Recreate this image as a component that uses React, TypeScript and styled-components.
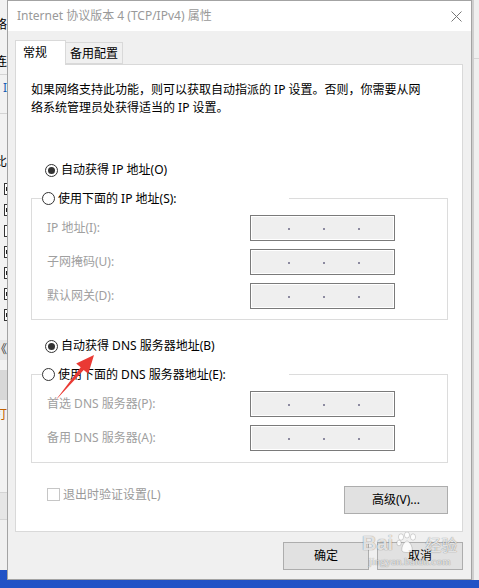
import React from "react";
import styled, { createGlobalStyle } from "styled-components";

const Global = createGlobalStyle`
  html, body { margin: 0; padding: 0; }
  body {
    width: 479px; height: 588px; overflow: hidden; background: #1c4bbd;
    font-family: "Noto Sans", "Noto Sans CJK SC", sans-serif;
    font-size: 12px; color: #000;
  }
`;

const Screen = styled.div`
  position: relative;
  width: 479px;
  height: 588px;
  overflow: hidden;
  display: grid;
  grid-template-columns: 7px 465px 7px;
  grid-template-rows: 580px 8px;
  background: linear-gradient(#1a45b0, #2153c6);
`;

/* ---------- background window strips ---------- */
const LeftStrip = styled.div`
  grid-column: 1;
  grid-row: 1;
  align-self: start;
  height: 570px;
  background: #f2f2f2;
  display: flex;
  flex-direction: column;
  overflow: hidden;
`;

const StripSeg = styled.div<{ $h: number; $bg?: string; $color?: string; $line?: boolean; $start?: boolean }>`
  height: ${(p) => p.$h}px;
  flex-shrink: 0;
  box-sizing: border-box;
  background: ${(p) => p.$bg || "transparent"};
  color: ${(p) => p.$color || "#000"};
  border-bottom: ${(p) => (p.$line ? "1px solid #d4d4d4" : "none")};
  display: flex;
  align-items: center;
  justify-content: ${(p) => (p.$start ? "flex-start" : "flex-end")};
  padding-left: ${(p) => (p.$start ? "4px" : "0")};
  overflow: hidden;
  white-space: nowrap;
  font-size: 12px;
  line-height: 14px;
`;

const StripCheck = styled.span<{ $on?: boolean }>`
  width: 12px;
  height: 12px;
  flex-shrink: 0;
  box-sizing: border-box;
  border: 1px solid #333;
  background: #fff;
  display: flex;
  align-items: center;
  padding-left: 1px;
  &::after {
    content: "";
    display: ${(p) => (p.$on ? "block" : "none")};
    width: 2px;
    height: 4px;
    background: #222;
  }
`;

const RightStrip = styled.div`
  grid-column: 3;
  grid-row: 1;
  background: #efefef;
  border-left: 2px solid #cfcfcf;
  display: flex;
  flex-direction: column;
`;

const RightSeg = styled.div<{ $h: number }>`
  height: ${(p) => p.$h}px;
  border-bottom: 1px solid #d6d6d6;
`;

/* ---------- dialog ---------- */
const Dialog = styled.div`
  grid-column: 2;
  grid-row: 1;
  box-sizing: border-box;
  height: 580px;
  border: 1px solid #a3a3a3;
  background: #f0f0f0;
  display: flex;
  flex-direction: column;
`;

const TitleBar = styled.div`
  height: 30px;
  flex-shrink: 0;
  background: #fff;
  display: flex;
  align-items: center;
  padding-left: 9px;
`;

const Title = styled.span`
  color: #999;
  font-size: 12px;
  line-height: 16px;
  white-space: nowrap;
`;

const CloseBox = styled.span`
  margin-left: auto;
  width: 30px;
  height: 30px;
  display: flex;
  align-items: center;
  justify-content: center;
`;

const Body = styled.div`
  flex: 1;
  display: flex;
  flex-direction: column;
  padding: 9px 8px 9px 7px;
`;

const Tabs = styled.div`
  height: 24px;
  display: flex;
  align-items: flex-end;
  position: relative;
  z-index: 1;
`;

const Tab = styled.div<{ $active?: boolean }>`
  box-sizing: border-box;
  height: ${(p) => (p.$active ? "25px" : "22px")};
  width: ${(p) => (p.$active ? "51px" : "57px")};
  margin-bottom: ${(p) => (p.$active ? "-1px" : "0")};
  background: ${(p) => (p.$active ? "#fff" : "#f0f0f0")};
  border: 1px solid #d9d9d9;
  border-bottom: ${(p) => (p.$active ? "none" : "1px solid #d9d9d9")};
  border-left: ${(p) => (p.$active ? "1px solid #d9d9d9" : "none")};
  padding-left: ${(p) => (p.$active ? "7px" : "4px")};
  padding-top: ${(p) => (p.$active ? "3px" : "2px")};
  line-height: 18px;
  font-size: 12px;
  white-space: nowrap;
`;

const Panel = styled.div`
  box-sizing: border-box;
  height: 468px;
  flex-shrink: 0;
  background: #fff;
  border: 1px solid #d9d9d9;
  padding: 16px 14px 0 15px;
  display: flex;
  flex-direction: column;
`;

const Desc = styled.div`
  line-height: 18px;
  white-space: nowrap;
`;

const RadioRow = styled.div<{ $mt?: number }>`
  display: flex;
  align-items: center;
  height: 20px;
  margin-top: ${(p) => p.$mt || 0}px;
  gap: 3px;
  white-space: nowrap;
  line-height: 20px;
`;

const RadioIndent = styled.span`
  width: 11px;
  flex-shrink: 0;
`;

const Radio = styled.span<{ $checked?: boolean }>`
  width: 13px;
  height: 13px;
  box-sizing: border-box;
  border-radius: 50%;
  border: 1px solid #333;
  background: #fff;
  flex-shrink: 0;
  display: flex;
  align-items: center;
  justify-content: center;
  &::after {
    content: "";
    width: 7px;
    height: 7px;
    border-radius: 50%;
    background: ${(p) => (p.$checked ? "#333" : "transparent")};
  }
`;

const Group = styled.fieldset<{ $mt: number; $pb: number }>`
  margin: ${(p) => p.$mt}px 0 0 0;
  padding: 6px 0 ${(p) => p.$pb}px 0;
  border: 1px solid #dcdcdc;
  min-width: 0;
`;

const Legend = styled.legend<{ $w: number }>`
  padding: 0;
  margin-left: 10px;
  width: ${(p) => p.$w}px;
  height: 21px;
  display: flex;
  align-items: center;
  gap: 3px;
  background: #fff;
  white-space: nowrap;
  line-height: 21px;
`;

const FieldGrid = styled.div`
  margin-left: 15px;
  display: grid;
  grid-template-columns: 203px 145px;
  row-gap: 8px;
  align-items: center;
`;

const FieldLabel = styled.span`
  color: #a0a0a0;
  white-space: nowrap;
  line-height: 16px;
`;

const IpBox = styled.div`
  box-sizing: border-box;
  height: 26px;
  border: 1px solid #7a7a7a;
  box-shadow: inset 0 0 0 1px #fff;
  background: #efefef;
  display: flex;
  align-items: center;
  padding: 2px 0 0 37px;
  gap: 33px;
`;

const IpDot = styled.span`
  width: 2px;
  height: 2px;
  background: #8c8aa0;
`;

const BottomRow = styled.div`
  margin-top: 23px;
  display: flex;
  justify-content: space-between;
  align-items: flex-start;
`;

const CheckLabel = styled.div`
  margin: 2px 0 0 16px;
  display: flex;
  align-items: center;
  gap: 3px;
  color: #9a9a9a;
  height: 13px;
  line-height: 13px;
  white-space: nowrap;
`;

const CheckBox = styled.span`
  width: 13px;
  height: 13px;
  box-sizing: border-box;
  border: 1px solid #c6c6c6;
  background: #fff;
  flex-shrink: 0;
`;

const Button = styled.div<{ $w: number }>`
  box-sizing: border-box;
  width: ${(p) => p.$w}px;
  height: 28px;
  background: #e1e1e1;
  border: 1px solid #adadad;
  display: flex;
  align-items: center;
  justify-content: center;
  white-space: nowrap;
  line-height: 16px;
`;

const ButtonRow = styled.div`
  margin-top: 10px;
  display: flex;
  justify-content: flex-end;
  gap: 8px;
`;

/* ---------- overlays ---------- */
const ArrowSvg = styled.svg`
  position: absolute;
  left: 0;
  top: 0;
  pointer-events: none;
`;

const Watermark = styled.div`
  position: absolute;
  left: 362px;
  top: 532px;
  display: flex;
  flex-direction: column;
  align-items: center;
  pointer-events: none;
  color: rgba(255, 255, 255, 0.8);
  text-shadow: 0 0 1px rgba(0, 0, 0, 0.35), 0 0 1px rgba(0, 0, 0, 0.25);
`;

const WmTop = styled.div`
  display: flex;
  align-items: flex-end;
  gap: 2px;
`;

const WmBai = styled.span`
  font-family: "Liberation Sans", Arial, sans-serif;
  font-weight: bold;
  font-size: 20px;
  line-height: 22px;
`;

const WmJy = styled.span`
  font-family: "Noto Sans CJK SC", sans-serif;
  font-size: 16px;
  line-height: 20px;
  margin-left: 4px;
`;

const WmUrl = styled.span`
  font-family: "Liberation Serif", serif;
  font-size: 11px;
  line-height: 12px;
  margin-top: 1px;
`;

const ipRows = ["IP 地址(I):", "子网掩码(U):", "默认网关(D):"];
const dnsRows = ["首选 DNS 服务器(P):", "备用 DNS 服务器(A):"];

function IpField() {
  return (
    <IpBox>
      <IpDot />
      <IpDot />
      <IpDot />
    </IpBox>
  );
}

const stripChecks = [true, true, false, true, true, true, true];

export default function App() {
  return (
    <>
      <Global />
      <Screen>
        <LeftStrip>
          <StripSeg $h={50}>络</StripSeg>
          <StripSeg $h={25} $line>连</StripSeg>
          <StripSeg $h={25} $color="#1a5fb4">I</StripSeg>
          <StripSeg $h={14} $line />
          <StripSeg $h={31} />
          <StripSeg $h={33}>比</StripSeg>
          {stripChecks.map((on, i) => (
            <StripSeg key={i} $h={21} $start>
              <StripCheck $on={on} />
            </StripSeg>
          ))}
          <StripSeg $h={15} />
          <StripSeg $h={20} $bg="#e6e6e6" $color="#333">《</StripSeg>
          <StripSeg $h={10} />
          <StripSeg $h={30} $bg="#d8d8d8" />
          <StripSeg $h={30} $color="#c06000">打</StripSeg>
          <StripSeg $h={63} $line />
          <StripSeg $h={27} $bg="#e6e6e6" $line />
          <StripSeg $h={50} $bg="#f0f0f0" />
        </LeftStrip>

        <Dialog>
          <TitleBar>
            <Title>Internet 协议版本 4 (TCP/IPv4) 属性</Title>
            <CloseBox>
              <svg width="11" height="11" viewBox="0 0 11 11">
                <path d="M0.5 0.5 L10.5 10.5 M10.5 0.5 L0.5 10.5" stroke="#777" strokeWidth="1" fill="none" />
              </svg>
            </CloseBox>
          </TitleBar>
          <Body>
            <Tabs>
              <Tab $active>常规</Tab>
              <Tab>备用配置</Tab>
            </Tabs>
            <Panel>
              <Desc>
                如果网络支持此功能，则可以获取自动指派的 IP 设置。否则，你需要从网
                <br />
                络系统管理员处获得适当的 IP 设置。
              </Desc>

              <RadioRow $mt={43}>
                <RadioIndent />
                <Radio $checked />
                自动获得 IP 地址(O)
              </RadioRow>

              <Group $mt={8} $pb={10}>
                <Legend $w={247}>
                  <Radio />
                  使用下面的 IP 地址(S):
                </Legend>
                <FieldGrid>
                  {ipRows.map((l) => (
                    <React.Fragment key={l}>
                      <FieldLabel>{l}</FieldLabel>
                      <IpField />
                    </React.Fragment>
                  ))}
                </FieldGrid>
              </Group>

              <RadioRow $mt={16}>
                <RadioIndent />
                <Radio $checked />
                自动获得 DNS 服务器地址(B)
              </RadioRow>

              <Group $mt={8} $pb={11}>
                <Legend $w={247}>
                  <Radio />
                  使用下面的 DNS 服务器地址(E):
                </Legend>
                <FieldGrid>
                  {dnsRows.map((l) => (
                    <React.Fragment key={l}>
                      <FieldLabel>{l}</FieldLabel>
                      <IpField />
                    </React.Fragment>
                  ))}
                </FieldGrid>
              </Group>

              <BottomRow>
                <CheckLabel>
                  <CheckBox />
                  退出时验证设置(L)
                </CheckLabel>
                <Button $w={104}>高级(V)...</Button>
              </BottomRow>
            </Panel>
            <ButtonRow>
              <Button $w={86}>确定</Button>
              <Button $w={86}>取消</Button>
            </ButtonRow>
          </Body>
        </Dialog>

        <RightStrip>
          <RightSeg $h={58} />
        </RightStrip>

        <ArrowSvg width="479" height="588" viewBox="0 0 479 588">
          <polygon
            points="94,355 76.2,363.4 80.7,367.3 55,401 83.7,369.9 88.3,373.8"
            fill="#ea3a34"
          />
        </ArrowSvg>

        <Watermark>
          <WmTop>
            <WmBai>Bai</WmBai>
            <svg width="24" height="22" viewBox="0 0 24 22">
              <g fill="rgba(255,255,255,0.85)" stroke="rgba(0,0,0,0.25)" strokeWidth="0.6">
                <ellipse cx="6" cy="5" rx="2.6" ry="3.2" />
                <ellipse cx="12" cy="3" rx="2.6" ry="3" />
                <ellipse cx="18" cy="5" rx="2.6" ry="3.2" />
                <ellipse cx="4" cy="11" rx="2.2" ry="2.8" />
                <path d="M7 19 C6 14 10 9 12 9 C14 9 18 14 17 19 C16 21 8 21 7 19 Z" />
              </g>
            </svg>
            <WmJy>经验</WmJy>
          </WmTop>
          <WmUrl>jingyan.baidu.com</WmUrl>
        </Watermark>
      </Screen>
    </>
  );
}
